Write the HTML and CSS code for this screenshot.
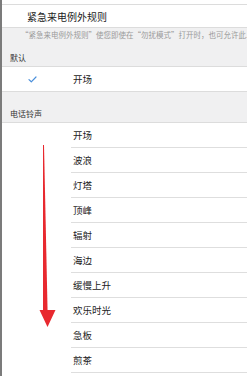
FILE: index.html
```html
<!DOCTYPE html>
<html lang="zh-CN">
<head>
    <meta charset="UTF-8">
    <meta name="viewport" content="width=device-width, initial-scale=1.0">
    <title>电话铃声</title>
    <link rel="stylesheet" href="styles.css">
</head>
<body>
    <div class="screen">
        <div class="top-strip"></div>
        <div class="row title-row">紧急来电例外规则</div>
        <p class="note">“紧急来电例外规则”使您即使在“勿扰模式”打开时，也可允许此人的来电发出声音和振动。</p>
        <div class="label label-default">默认</div>
        <div class="row picked">
            <svg class="check" width="9" height="7" viewBox="0 0 9 7">
                <path d="M1 3.6 L3.3 5.8 L8 1" fill="none" stroke="#4a8fdb" stroke-width="1.2" stroke-linecap="round" stroke-linejoin="round"/>
            </svg>
            <span>开场</span>
        </div>
        <div class="label label-tones">电话铃声</div>
        <ul class="tones">
            <li>开场</li>
            <li>波浪</li>
            <li>灯塔</li>
            <li>顶峰</li>
            <li>辐射</li>
            <li>海边</li>
            <li>缓慢上升</li>
            <li>欢乐时光</li>
            <li>急板</li>
            <li>煎茶</li>
            <li>丝绸</li>
        </ul>

        <!-- red scroll arrow drawn over the list -->
        <svg class="arrow" width="20" height="186" viewBox="0 0 20 186">
            <polygon points="5,1 6,1 9.6,168 5,168" fill="#e8292f"/>
            <polygon points="1.5,166 17.5,166 9.5,183" fill="#e8292f"/>
        </svg>
    </div>
</body>
</html>
```

FILE: styles.css
```css
* {
    margin: 0;
    padding: 0;
    box-sizing: border-box;
}
body {
    width: 247px;
    height: 376px;
    overflow: hidden;
    background: #f0f0f1;
    font-family: "Noto Sans CJK SC", "Noto Sans", sans-serif;
    color: #222;
}
.screen {
    position: relative;
    height: 376px;
    border-left: 2px solid #7b7b7b;
    overflow: hidden;
}
.top-strip {
    height: 5px;
    background: #fff;
    border-bottom: 1px solid #dcdcdc;
}
.row {
    background: #fff;
    display: flex;
    align-items: center;
}
.title-row {
    height: 23px;
    padding-left: 25px;
    font-size: 10px;
    border-bottom: 1px solid #dcdcdc;
}
.note {
    height: 18px;
    padding: 0 0 0 19px;
    font-size: 7.5px;
    line-height: 14px;
    color: #9a9a9a;
    white-space: nowrap;
    overflow: hidden;
}
.label {
    font-size: 8px;
    color: #333;
    padding-left: 8px;
    line-height: 12px;
}
.label-default {
    height: 20px;
    padding-top: 6px;
}
.picked {
    height: 26px;
    border-top: 1px solid #dcdcdc;
    border-bottom: 1px solid #dcdcdc;
    font-size: 9.5px;
}
.check {
    margin-left: 26px;
    margin-right: 36px;
}
.label-tones {
    height: 30px;
    padding-top: 16px;
}
.tones {
    list-style: none;
    background: #fff;
    border-top: 1px solid #dcdcdc;
}
.tones li {
    margin-left: 69px;
    padding-left: 2px;
    height: 25px;
    line-height: 24px;
    font-size: 9.5px;
    border-bottom: 1px solid #dedede;
}
.arrow {
    position: absolute;
    left: 36px;
    top: 144px;
}
```
